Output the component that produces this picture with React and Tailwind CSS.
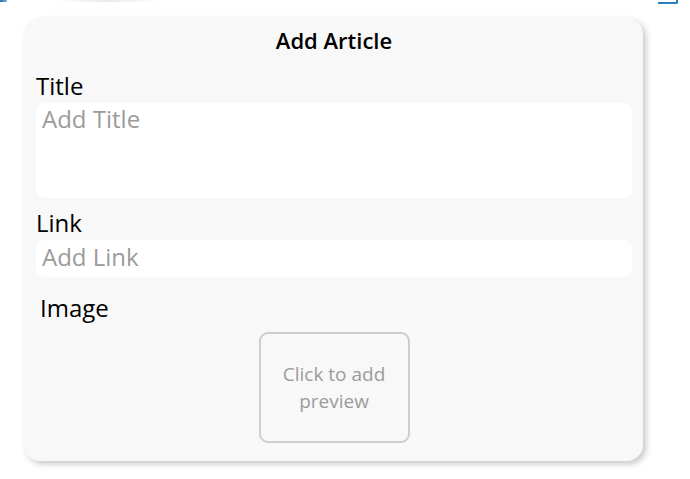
export default function App() {
  return (
    <div className="relative min-h-[479px] w-[690px] bg-white font-['Open_Sans',sans-serif] text-black">
      {/* slivers of the element cut off above */}
      <div className="absolute left-0 top-0 h-[2px] w-[7px] bg-gradient-to-r from-[#1f6fb0] to-[#7fb6df]" />
      <div className="absolute left-[55px] top-0 h-[2px] w-[105px] bg-gradient-to-r from-white via-[#e6ebef] to-white" />
      <div className="absolute right-[12px] top-0 h-[4px] w-[20px] rounded-br-[2px] border-b-2 border-r-2 border-[#2a7fc0]" />

      <div className="pl-[24px] pt-[18px]">
        <div className="flex w-[619px] flex-col rounded-[16px] bg-[#f8f8f8] pb-[18px] pl-[12px] pr-[11px] pt-[7px] shadow-[3px_3px_6px_rgba(0,0,0,0.22)]">
          <h1 className="text-center text-[22px] font-semibold leading-[30px]">Add Article</h1>

          <label htmlFor="title" className="mt-[15px] text-[24px] leading-[32px]">
            Title
          </label>
          <textarea
            id="title"
            placeholder="Add Title"
            className="mt-[1px] h-[95px] w-full resize-none rounded-[9px] bg-white px-[6px] py-0 text-[24px] leading-[32px] outline-none placeholder:text-[#9b9b9b]"
          />

          <label htmlFor="link" className="mt-[9px] text-[24px] leading-[32px]">
            Link
          </label>
          <input
            id="link"
            type="text"
            placeholder="Add Link"
            className="mt-[1px] h-[37px] w-full rounded-[9px] bg-white px-[6px] pb-[5px] pt-0 text-[24px] leading-[32px] outline-none placeholder:text-[#9b9b9b]"
          />

          <span className="mt-[15px] pl-[4px] text-[24px] leading-[32px]">Image</span>

          <button
            type="button"
            className="mx-auto mt-[8px] flex h-[111px] w-[151px] items-center justify-center rounded-[9px] border-2 border-[#cdcdcd] px-[10px] text-center text-[19px] leading-[27px] text-[#9b9b9b]"
          >
            Click to add preview
          </button>
        </div>
      </div>
    </div>
  );
}
